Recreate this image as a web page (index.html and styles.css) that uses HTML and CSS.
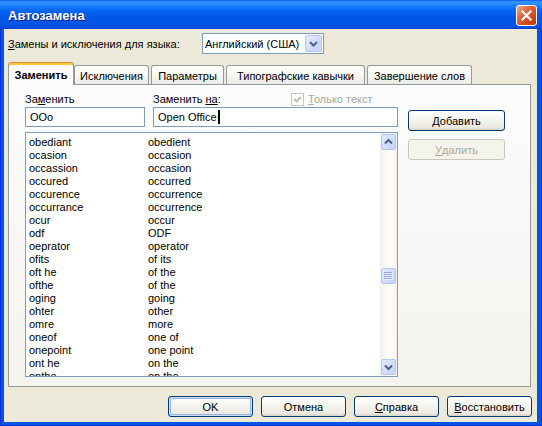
FILE: index.html
```html
<!DOCTYPE html>
<html lang="ru">
<head>
<meta charset="UTF-8">
<title>Автозамена</title>
<link rel="stylesheet" href="styles.css">
</head>
<body>

<div class="window">
    <div class="titlebar">
        <span class="title">Автозамена</span>
        <span class="close-btn">
            <svg width="13" height="13" viewBox="0 0 13 13"><path d="M2.5 2.5 L10.5 10.5 M10.5 2.5 L2.5 10.5" stroke="#fff" stroke-width="2.2" stroke-linecap="square"/></svg>
        </span>
    </div>

    <div class="client">
        <div class="lang-row">
            <span class="lang-label"><u>З</u>амены и исключения для языка:</span>
            <div class="combo">
                <span>Английский (США)</span>
                <span class="combo-btn">
                    <svg width="15" height="15" viewBox="0 0 15 15"><path d="M4 6 L7.5 9.5 L11 6" fill="none" stroke="#4D6185" stroke-width="2"/></svg>
                </span>
            </div>
        </div>

        <div class="tabs">
            <div class="tab active">Заменить</div>
            <div class="tab tab-exceptions">Исключения</div>
            <div class="tab tab-options">Параметры</div>
            <div class="tab tab-quotes">Типографские кавычки</div>
            <div class="tab tab-complete">Завершение слов</div>
        </div>

        <div class="panel">
            <div class="panel-main">
                <div class="label-row">
                    <span>За<u>м</u>енить</span>
                    <span>Заменить <u>на</u>:</span>
                    <span class="check">
                        <span class="check-box">
                            <svg width="11" height="11" viewBox="0 0 11 11"><path d="M2 5 L4.5 7.5 L9 3" fill="none" stroke="#C2BFB0" stroke-width="2"/></svg>
                        </span>
                        <span class="check-text"><u>Т</u>олько текст</span>
                    </span>
                </div>
                <div class="inputs">
                    <div class="input input-short">OOo</div>
                    <div class="input input-long">Open Office<span class="caret"></span></div>
                </div>
                <div class="list">
                    <div class="rows">
                        <div class="row"><span>obediant</span><span>obedient</span></div>
                        <div class="row"><span>ocasion</span><span>occasion</span></div>
                        <div class="row"><span>occassion</span><span>occasion</span></div>
                        <div class="row"><span>occured</span><span>occurred</span></div>
                        <div class="row"><span>occurence</span><span>occurrence</span></div>
                        <div class="row"><span>occurrance</span><span>occurrence</span></div>
                        <div class="row"><span>ocur</span><span>occur</span></div>
                        <div class="row"><span>odf</span><span>ODF</span></div>
                        <div class="row"><span>oeprator</span><span>operator</span></div>
                        <div class="row"><span>ofits</span><span>of its</span></div>
                        <div class="row"><span>oft he</span><span>of the</span></div>
                        <div class="row"><span>ofthe</span><span>of the</span></div>
                        <div class="row"><span>oging</span><span>going</span></div>
                        <div class="row"><span>ohter</span><span>other</span></div>
                        <div class="row"><span>omre</span><span>more</span></div>
                        <div class="row"><span>oneof</span><span>one of</span></div>
                        <div class="row"><span>onepoint</span><span>one point</span></div>
                        <div class="row"><span>ont he</span><span>on the</span></div>
                        <div class="row"><span>onthe</span><span>on the</span></div>
                    </div>
                    <div class="scrollbar">
                        <div class="sb-btn">
                            <svg width="13" height="14" viewBox="0 0 13 14"><path d="M3 8.5 L6.5 5 L10 8.5" fill="none" stroke="#4D6185" stroke-width="2"/></svg>
                        </div>
                        <div class="sb-btn sb-thumb">
                            <svg width="9" height="8" viewBox="0 0 9 8"><path d="M0 0.5 H8 M0 2.5 H8 M0 4.5 H8 M0 6.5 H8" stroke="#8DA4E2" stroke-width="1"/><path d="M1 1.5 H9 M1 3.5 H9 M1 5.5 H9 M1 7.5 H9" stroke="#F0F4FF" stroke-width="1"/></svg>
                        </div>
                        <div class="sb-btn sb-down">
                            <svg width="13" height="14" viewBox="0 0 13 14"><path d="M3 5.5 L6.5 9 L10 5.5" fill="none" stroke="#4D6185" stroke-width="2"/></svg>
                        </div>
                    </div>
                </div>
            </div>

            <div class="panel-side">
                <div class="btn btn-wide">Добавить</div>
                <div class="btn btn-wide disabled"><u>У</u>далить</div>
            </div>
        </div>

        <div class="footer">
            <div class="btn default">OK</div>
            <div class="btn">Отмена</div>
            <div class="btn"><u>С</u>правка</div>
            <div class="btn"><u>В</u>осстановить</div>
        </div>
    </div>
</div>

</body>
</html>
```

FILE: styles.css
```css
body {
    margin: 0;
    font-family: "Liberation Sans", Arial, sans-serif;
    font-size: 11px;
    color: #000;
    background: #fff;
}
u {
    text-decoration: underline;
    text-underline-offset: 1px;
}

.window {
    width: 542px;
    height: 426px;
    display: flex;
    flex-direction: column;
    background: #0055E5;
    box-shadow: inset 1px 0 #0831D9, inset -1px 0 #0831D9, inset 0 -1px #0831D9;
}
.titlebar {
    height: 29px;
    flex-shrink: 0;
    display: flex;
    align-items: center;
    justify-content: space-between;
    padding: 0 5px 0 8px;
    background: linear-gradient(to bottom, #0A5AE6 0px, #3C95FF 2px, #2A8CFF 4px, #1279F9 7px, #0365F0 11px, #0058E6 16px, #0055E5 24px, #0050DC 27px, #0046CF 29px);
}
.title {
    color: #fff;
    font-weight: bold;
    font-size: 13px;
    text-shadow: 1px 1px #0A1883;
    margin-top: 1px;
}
.close-btn {
    width: 21px;
    height: 21px;
    box-sizing: border-box;
    border: 1px solid #fff;
    border-radius: 3px;
    background: linear-gradient(135deg, #F0A88C 0%, #E2693F 35%, #D4471C 70%, #C2380F 100%);
    display: flex;
    align-items: center;
    justify-content: center;
    margin-top: 2px;
}

.client {
    flex: 1;
    margin: 0 5px 4px 4px;
    background: #ECE9D8;
    padding: 4px 5px 5px 4px;
    display: flex;
    flex-direction: column;
}

.lang-row {
    display: flex;
    align-items: center;
    height: 21px;
}
.lang-label {
    width: 194px;
}
.combo {
    width: 122px;
    height: 21px;
    box-sizing: border-box;
    border: 1px solid #7F9DB9;
    background: #fff;
    display: flex;
    align-items: center;
    justify-content: space-between;
    padding: 0 1px 0 2px;
}
.combo-btn {
    width: 17px;
    height: 17px;
    box-sizing: border-box;
    border: 1px solid #BAC9F0;
    border-radius: 2px;
    background: linear-gradient(135deg, #E2EAFE, #C3D2FB);
    display: flex;
    align-items: center;
    justify-content: center;
}

.tabs {
    display: flex;
    align-items: flex-end;
    margin-top: 8px;
    margin-bottom: -1px;
    height: 23px;
    position: relative;
    z-index: 1;
}
.tab {
    height: 19px;
    box-sizing: border-box;
    border: 1px solid #919B9C;
    border-bottom: none;
    border-radius: 3px 3px 0 0;
    background: linear-gradient(#FFFFFF, #F7F7F4 50%, #EBEAE4);
    margin-bottom: 1px;
    margin-right: 2px;
    display: flex;
    align-items: center;
    justify-content: center;
    padding-top: 1px;
}
.tab.active {
    width: 66px;
    height: 23px;
    margin: 0;
    border-top: 1px solid #E68B2C;
    box-shadow: inset 0 2px #FFC73C;
    background: #FCFCFE;
    font-weight: bold;
    padding-top: 2px;
}
.tab-exceptions { width: 75px; }
.tab-options { width: 73px; }
.tab-quotes { width: 139px; }
.tab-complete { width: 105px; }

.panel {
    height: 303px;
    box-sizing: border-box;
    margin-right: 1px;
    border: 1px solid #919B9C;
    background: linear-gradient(#FCFCFE, #F4F3EE);
    display: flex;
    gap: 10px;
    padding: 7px 0 9px 16px;
}
.panel-main {
    width: 373px;
    display: flex;
    flex-direction: column;
}
.label-row {
    display: grid;
    grid-template-columns: 128px 138px auto;
    align-items: center;
    height: 14px;
}
.check {
    display: flex;
    align-items: center;
    gap: 4px;
}
.check-box {
    width: 13px;
    height: 13px;
    box-sizing: border-box;
    border: 1px solid #CAC8BB;
    background: #fff;
    display: flex;
    align-items: center;
    justify-content: center;
}
.check-text {
    color: #ACA899;
}
.inputs {
    display: flex;
    gap: 8px;
    margin-top: 1px;
}
.input {
    height: 20px;
    box-sizing: border-box;
    border: 1px solid #7F9DB9;
    background: #fff;
    padding: 0 4px;
    display: flex;
    align-items: center;
}
.input-short { width: 120px; }
.input-long { width: 245px; }
.caret {
    width: 2px;
    height: 14px;
    background: #000;
    margin-left: 1px;
}

.list {
    margin-top: 5px;
    height: 245px;
    box-sizing: border-box;
    border: 1px solid #7F9DB9;
    background: #fff;
    display: flex;
}
.rows {
    flex: 1;
    padding: 3px 0 0 3px;
    overflow: hidden;
}
.row {
    display: flex;
    height: 13px;
    line-height: 13px;
    white-space: nowrap;
}
.row span:first-child {
    width: 119px;
}
.scrollbar {
    width: 17px;
    display: flex;
    flex-direction: column;
    background: linear-gradient(to right, #F3F1EC, #FEFEFB 60%, #F3F1EC);
}
.sb-btn {
    width: 15px;
    height: 16px;
    box-sizing: border-box;
    margin: 1px 1px 0 1px;
    border: 1px solid #B4C6F2;
    border-radius: 2px;
    background: linear-gradient(135deg, #E3EBFE, #C2D1FB);
    display: flex;
    align-items: center;
    justify-content: center;
}
.sb-thumb {
    margin-top: 118px;
}
.sb-down {
    margin-top: auto;
    margin-bottom: 1px;
}

.panel-side {
    display: flex;
    flex-direction: column;
    gap: 8px;
    padding-top: 18px;
}
.btn {
    width: 85px;
    height: 21px;
    box-sizing: border-box;
    border: 1px solid #003C74;
    border-radius: 3px;
    background: linear-gradient(#FFFFFF, #F5F4EF 45%, #ECEAE1 85%, #D8D2C6);
    display: flex;
    align-items: center;
    justify-content: center;
}
.btn-wide {
    width: 97px;
}
.btn.default {
    box-shadow: inset 0 0 0 1px #CEDCF8, inset 0 0 0 2px #97B4EA;
}
.btn.disabled {
    border-color: #C9C7BA;
    color: #ACA899;
    background: #F5F4EA;
}

.footer {
    display: flex;
    justify-content: flex-end;
    gap: 8px;
    margin-top: 9px;
}
```
